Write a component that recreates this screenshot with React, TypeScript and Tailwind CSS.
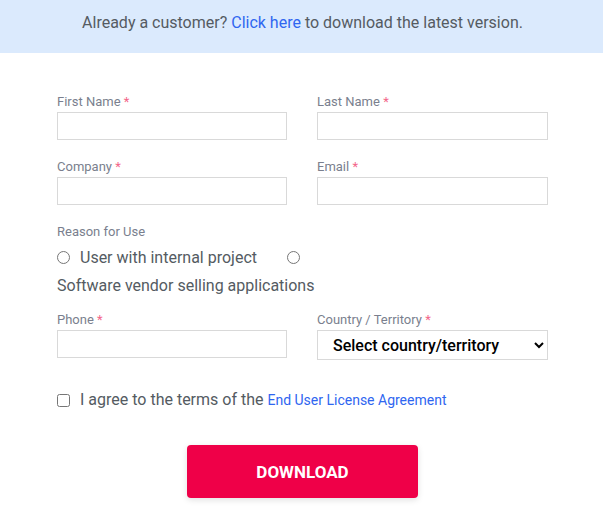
import React from "react";

function Label({ text, required = true }: { text: string; required?: boolean }) {
  return (
    <label className="block h-[16px] text-[13px] leading-[16px] text-[#7a7f8e] mb-[2px]">
      {text}
      {required && <span className="text-[#f3668a]"> *</span>}
    </label>
  );
}

function Field({ text }: { text: string }) {
  return (
    <div className="flex flex-col">
      <Label text={text} />
      <input type="text" className="h-[28px] w-full border border-[#d9d9d9] bg-white outline-none" />
    </div>
  );
}

export default function App() {
  return (
    <div className="w-[603px] h-[520px] bg-white" style={{ fontFamily: "Roboto, 'Liberation Sans', sans-serif" }}>
      <div className="h-[53px] bg-[#dbeafd] flex items-center justify-center pb-[7px] pl-[2px] text-[16px] text-[#555b62]">
        <span>
          Already a customer? <a className="text-[#2f66f0]">Click here</a> to download the latest version.
        </span>
      </div>
      <div className="pl-[57px] pr-[55px] pt-[41px]">
        <div className="grid grid-cols-[230px_231px] gap-x-[30px] gap-y-[19px]">
          <Field text="First Name" />
          <Field text="Last Name" />
          <Field text="Company" />
          <Field text="Email" />
        </div>
        <div className="mt-[19px]">
          <Label text="Reason for Use" required={false} />
          <div className="mt-[4px] text-[16px] leading-[28px] text-[#545b62]">
            <input type="radio" name="r" className="w-[13px] h-[13px] ml-0 mr-[10px] align-[-1px]" />
            <span className="inline-block">User with internal project</span>
            <input type="radio" name="r" className="w-[13px] h-[13px] ml-[30px] mr-[10px] align-[-1px]" />
            <span className="inline-block">Software vendor selling applications</span>
          </div>
        </div>
        <div className="mt-[12px] grid grid-cols-[230px_231px] gap-x-[30px]">
          <div className="flex flex-col">
            <Label text="Phone" />
            <input type="text" className="h-[28px] w-full border border-[#d9d9d9] bg-white outline-none" />
          </div>
          <div className="flex flex-col">
            <Label text="Country / Territory" />
            <select className="h-[30px] w-full border border-[#d9d9d9] bg-white pl-[11px] pr-[2px] text-[16px] font-medium text-black outline-none">
              <option>Select country/territory</option>
            </select>
          </div>
        </div>
        <div className="mt-[30px] flex items-center h-[20px] text-[16px] text-[#545b62]">
          <input type="checkbox" className="w-[13px] h-[13px] m-0 mr-[10px]" />
          <span>
            I agree to the terms of the{" "}
            <a className="text-[14px] text-[#2f66f0]">End User License Agreement</a>
          </span>
        </div>
        <div className="mt-[35px] pl-[130px]">
          <button className="w-[231px] h-[53px] pt-[3px] rounded-[4px] bg-[#ef0048] text-white text-[17px] font-bold shadow-[0_2px_6px_rgba(0,0,0,0.12)]">
            DOWNLOAD
          </button>
        </div>
      </div>
    </div>
  );
}
